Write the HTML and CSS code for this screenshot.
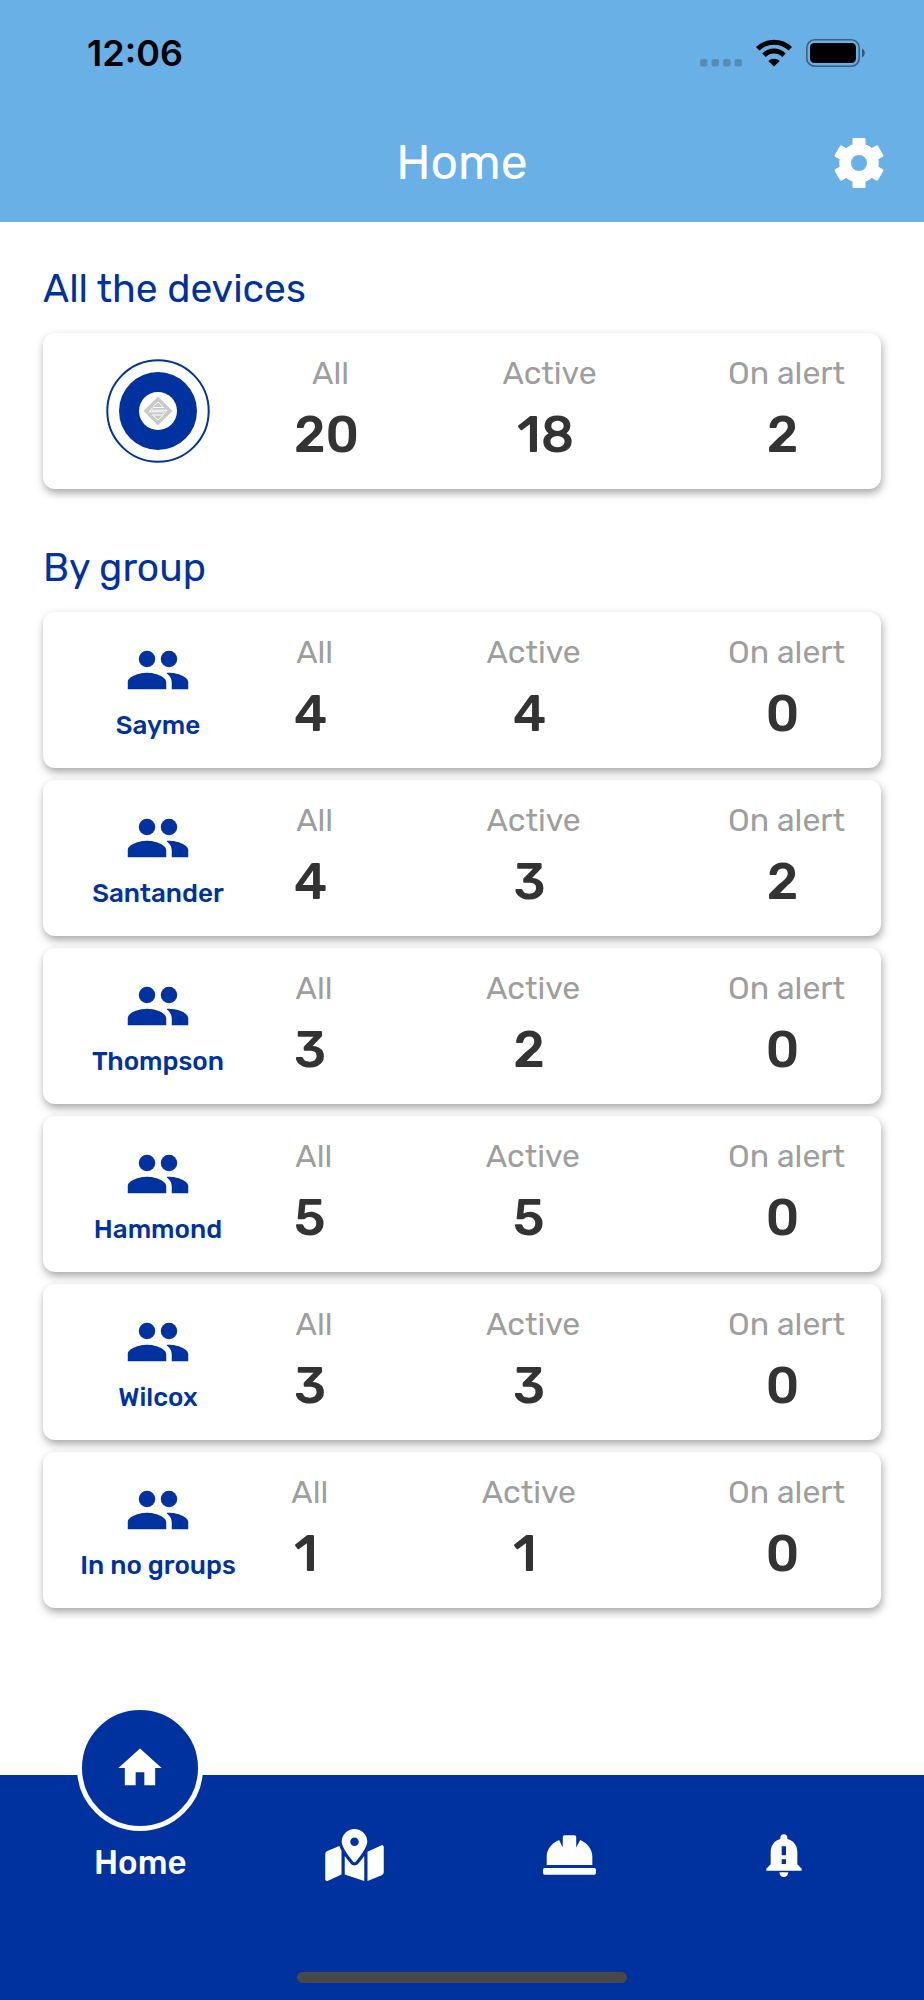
FILE: index.html
```html
<!DOCTYPE html>
<html lang="en">
<head>
    <meta charset="UTF-8">
    <meta name="viewport" content="width=device-width, initial-scale=1.0">
    <title>Home</title>
    <link rel="stylesheet" href="styles.css">
</head>
<body>
    <!-- Shared icons -->
    <svg class="sprite" aria-hidden="true">
        <symbol id="icon-group" viewBox="0 0 24 24">
            <circle cx="16" cy="8" r="3"/>
            <circle cx="8" cy="8" r="3"/>
            <path d="M8 13c-2.33 0-7 1.17-7 3.5V19h14v-2.5c0-2.33-4.67-3.5-7-3.5zm8 0c-.29 0-.62.02-.97.05 1.16.84 1.97 1.97 1.97 3.45V19h6v-2.5c0-2.33-4.67-3.5-7-3.5z"/>
        </symbol>
    </svg>

    <header class="app-header">
        <div class="status-bar">
            <span class="status-time">12:06</span>
            <div class="status-icons">
                <svg class="signal" width="42" height="28" viewBox="0 0 42 28" aria-hidden="true">
                    <rect x="0" y="20" width="7.5" height="7.5" rx="2.5"/>
                    <rect x="11.5" y="20" width="7.5" height="7.5" rx="2.5"/>
                    <rect x="23" y="20" width="7.5" height="7.5" rx="2.5"/>
                    <rect x="34.5" y="20" width="7.5" height="7.5" rx="2.5"/>
                </svg>
                <svg width="36" height="28" viewBox="0 0 36 28" aria-hidden="true">
                    <g fill="none" stroke="#000" stroke-width="5">
                        <path d="M1.700 9.800A23.500 23.500 0 0 1 34.300 9.800"/>
                        <path d="M8 16.200A14.300 14.300 0 0 1 28 16.200"/>
                    </g>
                    <path d="M12.300 22A8.400 8.400 0 0 1 23.700 22L18 27.600z"/>
                </svg>
                <svg width="60" height="28" viewBox="0 0 60 28" aria-hidden="true">
                    <rect x="0.8" y="0.8" width="52.4" height="26.4" rx="8" fill="none" stroke="#000" stroke-opacity=".45" stroke-width="1.6"/>
                    <rect x="4" y="4" width="46" height="20" rx="4.5"/>
                    <path d="M56 9.500a5 5 0 0 1 0 9z" fill-opacity=".5"/>
                </svg>
            </div>
        </div>
        <div class="title-bar">
            <h1 class="page-title">Home</h1>
            <button class="settings-btn" type="button" aria-label="Settings">
                <svg width="50" height="50" viewBox="-10 -10 20 20" aria-hidden="true">
                    <circle r="5.5" fill="none" stroke="#fff" stroke-width="4.6"/>
                    <g fill="#fff">
                        <path id="tooth" d="M-2.600-5V-9.500Q-2.600-10-2.100-10H2.100Q2.600-10 2.600-9.500V-7.300L4.800-6.200 3-4H-3L-4.800-6.200-2.600-7.300z"/>
                        <use href="#tooth" transform="rotate(60)"/>
                        <use href="#tooth" transform="rotate(120)"/>
                        <use href="#tooth" transform="rotate(180)"/>
                        <use href="#tooth" transform="rotate(240)"/>
                        <use href="#tooth" transform="rotate(300)"/>
                    </g>
                </svg>
            </button>
        </div>
    </header>

    <main class="content">
        <section class="section">
            <h2 class="section-title">All the devices</h2>
            <div class="card">
                <div class="card-label">
                    <svg width="104" height="104" viewBox="-52 -52 104 104" aria-hidden="true">
                        <circle r="50.7" fill="#fff" stroke="#00329f" stroke-width="2"/>
                        <circle r="39" fill="#00329f"/>
                        <circle r="19" fill="#fff"/>
                        <path d="M0-14.500L14.500 0 0 14.500-14.500 0z" fill="#c9c9c9"/>
                        <path d="M-5-4.500L0-9 5-4.500M6-3.500H-5L-9 .8H6M5 4.500L0 9-5 4.500M-6 4H5L9-.8H-6" fill="none" stroke="#fff"/>
                    </svg>
                </div>
                <dl class="stats">
                    <div class="stat"><dt>All</dt><dd>20</dd></div>
                    <div class="stat"><dt>Active</dt><dd>18</dd></div>
                    <div class="stat"><dt>On alert</dt><dd>2</dd></div>
                </dl>
            </div>
        </section>

        <section class="section">
            <h2 class="section-title">By group</h2>
            <div class="card-list">
                <article class="card">
                    <div class="card-label group-label">
                        <svg class="group-icon" aria-hidden="true"><use href="#icon-group"/></svg>
                        <h3 class="group-name">Sayme</h3>
                    </div>
                    <dl class="stats">
                        <div class="stat"><dt>All</dt><dd>4</dd></div>
                        <div class="stat"><dt>Active</dt><dd>4</dd></div>
                        <div class="stat"><dt>On alert</dt><dd>0</dd></div>
                    </dl>
                </article>
                <article class="card">
                    <div class="card-label group-label">
                        <svg class="group-icon" aria-hidden="true"><use href="#icon-group"/></svg>
                        <h3 class="group-name">Santander</h3>
                    </div>
                    <dl class="stats">
                        <div class="stat"><dt>All</dt><dd>4</dd></div>
                        <div class="stat"><dt>Active</dt><dd>3</dd></div>
                        <div class="stat"><dt>On alert</dt><dd>2</dd></div>
                    </dl>
                </article>
                <article class="card">
                    <div class="card-label group-label">
                        <svg class="group-icon" aria-hidden="true"><use href="#icon-group"/></svg>
                        <h3 class="group-name">Thompson</h3>
                    </div>
                    <dl class="stats">
                        <div class="stat"><dt>All</dt><dd>3</dd></div>
                        <div class="stat"><dt>Active</dt><dd>2</dd></div>
                        <div class="stat"><dt>On alert</dt><dd>0</dd></div>
                    </dl>
                </article>
                <article class="card">
                    <div class="card-label group-label">
                        <svg class="group-icon" aria-hidden="true"><use href="#icon-group"/></svg>
                        <h3 class="group-name">Hammond</h3>
                    </div>
                    <dl class="stats">
                        <div class="stat"><dt>All</dt><dd>5</dd></div>
                        <div class="stat"><dt>Active</dt><dd>5</dd></div>
                        <div class="stat"><dt>On alert</dt><dd>0</dd></div>
                    </dl>
                </article>
                <article class="card">
                    <div class="card-label group-label">
                        <svg class="group-icon" aria-hidden="true"><use href="#icon-group"/></svg>
                        <h3 class="group-name">Wilcox</h3>
                    </div>
                    <dl class="stats">
                        <div class="stat"><dt>All</dt><dd>3</dd></div>
                        <div class="stat"><dt>Active</dt><dd>3</dd></div>
                        <div class="stat"><dt>On alert</dt><dd>0</dd></div>
                    </dl>
                </article>
                <article class="card">
                    <div class="card-label group-label">
                        <svg class="group-icon" aria-hidden="true"><use href="#icon-group"/></svg>
                        <h3 class="group-name">In no groups</h3>
                    </div>
                    <dl class="stats">
                        <div class="stat"><dt>All</dt><dd>1</dd></div>
                        <div class="stat"><dt>Active</dt><dd>1</dd></div>
                        <div class="stat"><dt>On alert</dt><dd>0</dd></div>
                    </dl>
                </article>
            </div>
        </section>
    </main>

    <footer class="tab-bar">
        <nav class="tabs">
            <a class="tab active" href="#home" aria-current="page">
                <span class="tab-circle">
                    <svg width="52" height="52" viewBox="0 0 24 24" aria-hidden="true">
                        <path d="M10 20v-6h4v6h5v-8h3L12 3 2 12h3v8z"/>
                    </svg>
                </span>
                <span class="tab-text">Home</span>
            </a>
            <a class="tab" href="#map" aria-label="Map">
                <svg width="59" height="52" viewBox="0 0 576 512" aria-hidden="true">
                    <path d="M288 0c-69.59 0-126 56.41-126 126 0 56.26 82.35 158.8 113.9 196.02 6.39 7.54 17.82 7.54 24.2 0C331.65 284.8 414 182.26 414 126 414 56.41 357.59 0 288 0zm0 168c-23.2 0-42-18.8-42-42s18.8-42 42-42 42 18.8 42 42-18.8 42-42 42zM20.12 215.95A32.006 32.006 0 0 0 0 245.66v250.32c0 11.32 11.43 19.06 21.94 14.86L160 448V214.92c-8.84-15.98-16.07-31.54-21.25-46.42L20.12 215.95zM288 359.67c-14.07 0-27.38-6.18-36.51-16.96-19.66-23.2-40.57-49.62-59.49-76.72v182l192 64V266c-18.92 27.09-39.82 53.52-59.49 76.72-9.13 10.77-22.44 16.95-36.51 16.95zm266.06-198.51L416 224v288l139.88-55.95A31.996 31.996 0 0 0 576 426.34V176.02c0-11.32-11.43-19.06-21.94-14.86z"/>
                </svg>
            </a>
            <a class="tab" href="#workers" aria-label="Workers">
                <svg width="53" height="40" viewBox="0 0 158 118" aria-hidden="true">
                    <path d="M11 89V63C11 41 27 22 48 14L59 37V5Q59 0 64 0H94Q99 0 99 5V37L111 14C131 22 147 41 147 63V89Z"/>
                    <rect x="0" y="98" width="158" height="20" rx="5"/>
                </svg>
            </a>
            <a class="tab" href="#alerts" aria-label="Alerts">
                <svg width="36" height="43" viewBox="0 0 106 129" aria-hidden="true">
                    <path fill-rule="evenodd" d="M0 104L13 91V55C13 34 24 20 42 15V11a10.500 10.500 0 0 1 21 0V15C82 20 93 34 93 55V91L106 104V110H0ZM46 37V64H59V37ZM46 76V90H59V76Z"/>
                    <path d="M39 115H66A13.500 14 0 0 1 39 115z"/>
                </svg>
            </a>
        </nav>
        <div class="home-indicator"></div>
    </footer>
</body>
</html>
```
FILE: styles.css
```css
* {
    box-sizing: border-box;
}
body {
    font-family: 'Rubik', 'Inter', sans-serif;
    background-color: #fff;
    color: #333;
    margin: 0;
    min-height: 100vh;
    display: flex;
    flex-direction: column;
}
h1, h2, h3, dl, dd {
    margin: 0;
}
svg {
    display: block;
}
.sprite {
    position: absolute;
    width: 0;
    height: 0;
}

/* Header */
.app-header {
    background-color: #69b0e6;
    padding-bottom: 2px;
}
.status-bar {
    display: flex;
    justify-content: space-between;
    align-items: center;
    height: 105px;
    padding: 0 58px 0 87px;
}
.status-time {
    font-family: 'Inter', sans-serif;
    font-size: 36px;
    font-weight: 600;
    color: #000;
}
.status-icons {
    display: flex;
    gap: 14px;
}
.signal {
    opacity: 0.2;
}
.title-bar {
    display: grid;
    grid-template-columns: 1fr auto 1fr;
    align-items: center;
    height: 115px;
    padding: 0 40px;
}
.page-title {
    grid-column: 2;
    color: #fff;
    font-size: 48px;
    font-weight: 400;
    line-height: 60px;
}
.settings-btn {
    justify-self: end;
    padding: 0;
    border: none;
    background: none;
    cursor: pointer;
}

/* Content */
.content {
    flex: 1;
    padding: 43px 43px 60px;
}
.section {
    margin-bottom: 55px;
}
.section-title {
    color: #00329f;
    font-size: 39px;
    font-weight: 400;
    line-height: 48px;
    margin-bottom: 20px;
}
.card-list {
    display: flex;
    flex-direction: column;
    gap: 12px;
}
.card {
    display: flex;
    align-items: center;
    height: 156px;
    padding-right: 36px;
    background-color: #fff;
    border-radius: 12px;
    box-shadow: 1px 4px 8px rgba(0, 0, 0, 0.35);
}
.card-label {
    flex: none;
    width: 230px;
    display: flex;
    flex-direction: column;
    align-items: center;
}
.group-label {
    padding-top: 6px;
}
.group-icon {
    width: 66px;
    height: 66px;
    fill: #00329f;
}
.group-name {
    color: #00329f;
    font-size: 26px;
    font-weight: 500;
    line-height: 46px;
}
.stats {
    flex: 1;
    display: flex;
    justify-content: space-between;
    margin-left: 9px;
}
.stat {
    text-align: center;
}
.stat dt {
    padding-left: 8px;
    color: #9e9e9e;
    font-size: 32px;
    line-height: 48px;
}
.stat dd {
    padding: 0 12px;
    font-size: 51px;
    font-weight: 500;
    line-height: 76px;
}

/* Bottom navigation */
.tab-bar {
    height: 225px;
    padding: 0 33px 17px;
    background-color: #00329f;
    display: flex;
    flex-direction: column;
    justify-content: space-between;
    align-items: center;
}
.tabs {
    width: 100%;
    display: grid;
    grid-template-columns: repeat(4, 1fr);
}
.tab {
    height: 160px;
    display: flex;
    flex-direction: column;
    align-items: center;
    justify-content: center;
    color: #fff;
    fill: currentColor;
    text-decoration: none;
}
.tab.active {
    justify-content: flex-start;
}
.tab-circle {
    flex: none;
    width: 126px;
    height: 126px;
    margin-top: -70px;
    border: 5px solid #fff;
    border-radius: 50%;
    background-color: #00329f;
    display: flex;
    align-items: center;
    justify-content: center;
}
.tab-text {
    font-size: 33px;
    font-weight: 500;
    line-height: 40px;
    margin-top: 12px;
}
.home-indicator {
    width: 330px;
    max-width: 60%;
    height: 11px;
    border-radius: 6px;
    background-color: #484848;
}
```
